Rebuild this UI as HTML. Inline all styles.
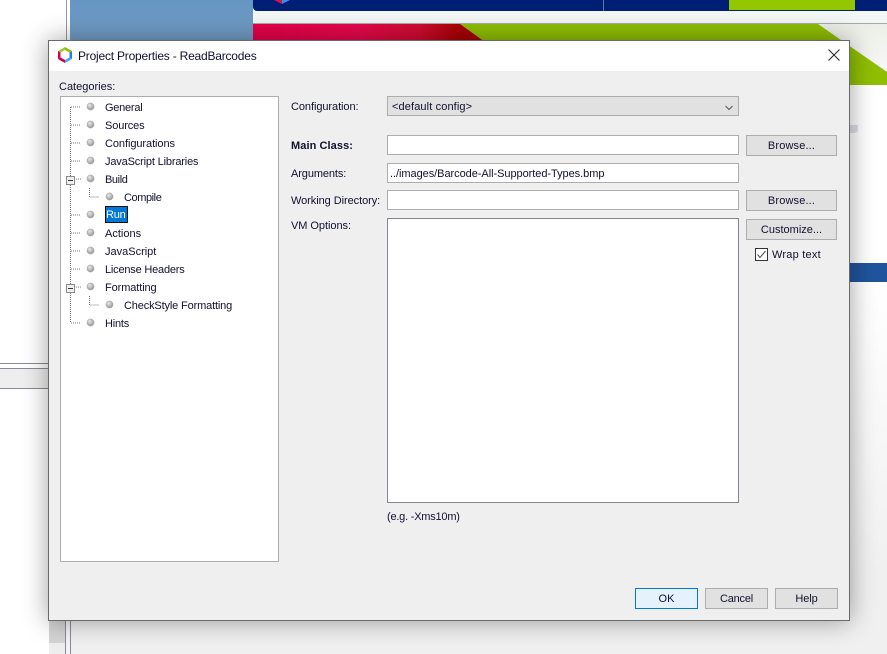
<!DOCTYPE html>
<html><head><meta charset="utf-8"><style>
html,body{margin:0;padding:0}
body{width:887px;height:654px;position:relative;overflow:hidden;background:#fff;font-family:"Liberation Sans",sans-serif;font-size:11px;color:#111}
div{position:absolute;box-sizing:border-box}
.t{white-space:nowrap;line-height:14px;height:14px;color:#101030}
.f{background:#fff;border:1px solid #adadad}
.b{background:#e1e1e1;border:1px solid #adadad;text-align:center;line-height:20px;white-space:nowrap;color:#101030}
</style></head><body>
<!-- background -->
<div style="left:66px;top:0;width:1px;height:654px;background:#9a9aa4"></div>
<div style="left:70px;top:0;width:183px;height:60px;background:linear-gradient(#6595c2,#7aa2c8)"></div>
<div style="left:253px;top:0;width:634px;height:11px;background:#001e73;overflow:hidden;border-radius:0 0 0 4px">
  <div style="left:55px;top:-20px;font-size:25px;font-weight:bold;line-height:25px;letter-spacing:.8px;color:#c4cce0;white-space:nowrap">NetBeans IDE</div>
  <svg style="position:absolute;left:21px;top:0" width="16" height="5"><polygon points="0,0 8,0 8,4" fill="#e0104c"/><polygon points="8,0 16,0 8,4" fill="#3090e8"/></svg>
</div>
<div style="left:603px;top:0;width:1px;height:11px;background:#5f78b0"></div>
<div style="left:729px;top:0;width:126px;height:10px;background:#93c700"></div>
<div style="left:253px;top:11px;width:634px;height:12px;background:#f2f6f4"></div>
<div style="left:253px;top:23px;width:634px;height:1px;background:#a8a8b0"></div>
<svg style="position:absolute;left:253px;top:24px" width="634" height="61">
<defs><linearGradient id="r" x1="0" x2="1" y1="0" y2="0"><stop offset="0" stop-color="#e6004a"/><stop offset=".45" stop-color="#e6084c"/><stop offset=".72" stop-color="#d00c30"/><stop offset=".9" stop-color="#a80000"/><stop offset="1" stop-color="#a80000"/></linearGradient>
<linearGradient id="w" x1="0" x2="0" y1="0" y2="1"><stop offset="0" stop-color="#ecefe6"/><stop offset="1" stop-color="#f8f8f8"/></linearGradient></defs>
<rect width="634" height="61" fill="#8fbf00"/>
<polygon points="0,0 207,0 232,18 0,18" fill="url(#r)"/>
<polygon points="565,0 634,0 634,48" fill="url(#w)"/>
</svg>
<div style="left:850px;top:85px;width:37px;height:197px;background:#fff"></div>
<div style="left:850px;top:125px;width:8px;height:8px;background:#dde0e8;border-radius:0 0 3px 0"></div>
<div style="left:850px;top:263px;width:37px;height:19px;background:#20549c"></div>
<div style="left:850px;top:282px;width:37px;height:290px;background:linear-gradient(#fff,#f0f0f0)"></div>
<div style="left:71px;top:572px;width:816px;height:82px;background:#f0f0f0"></div>
<div style="left:0;top:363px;width:48px;height:1px;background:#8a8a96"></div>
<div style="left:0;top:368px;width:48px;height:1px;background:#8a8a96"></div>
<div style="left:0;top:369px;width:48px;height:19px;background:#eeeeee"></div>
<div style="left:0;top:388px;width:48px;height:1px;background:#8a8a96"></div>
<div style="left:49px;top:620px;width:16px;height:34px;background:#eeeeee"></div>
<div style="left:49px;top:620px;width:16px;height:23px;background:#d4d4d4"></div>
<div style="left:65px;top:620px;width:6px;height:34px;background:#f4f4f8"></div>
<div style="left:65px;top:620px;width:1px;height:34px;background:#8a8a96"></div>
<div style="left:70px;top:620px;width:1px;height:34px;background:#8a8a96"></div>
<!-- dialog -->
<div style="left:48px;top:40px;width:802px;height:581px;background:#efefef;border:1px solid #6a6a6a;box-shadow:0 0 24px rgba(0,0,0,.38)"></div>
<div style="left:49px;top:41px;width:800px;height:30px;background:#fff"></div>
<svg style="position:absolute;left:57px;top:46px" width="16" height="18" viewBox="0 0 16 18">
<polygon points="8,1 15,5 15,13 8,17 1,13 1,5" fill="#fff"/>
<polygon points="8,1 15,5 12.5,6.5 8,4" fill="#8cc000"/><polygon points="8,1 1,5 3.5,6.5 8,4" fill="#a0c830"/>
<polygon points="1,5 3.5,6.5 3.5,11.5 1,13" fill="#d8004c"/><polygon points="1,13 3.5,11.5 8,14 8,17" fill="#c80048"/>
<polygon points="15,5 12.5,6.5 12.5,11.5 15,13" fill="#2080e0"/><polygon points="15,13 12.5,11.5 8,14 8,17" fill="#40a8f0"/>
</svg>
<div class="t" style="left:78px;top:49px;font-size:12px;letter-spacing:-.21px">Project Properties - ReadBarcodes</div>
<svg style="position:absolute;left:828px;top:49px" width="12" height="12"><path d="M.5.5L11.5 11.5M11.5.5L.5 11.5" stroke="#222" stroke-width="1" fill="none"/></svg>
<div class="t" style="left:59px;top:80px">Categories:</div>
<!-- tree -->
<div style="left:60px;top:96px;width:219px;height:466px;background:#fff;border:1px solid #adadad"></div>
<svg style="position:absolute;left:60px;top:96px" width="219" height="240">
<g stroke="#777" stroke-width="1" stroke-dasharray="1 1" fill="none" shape-rendering="crispEdges">
<path d="M10.5 11V227"/>
<path d="M11 11H21M11 29H21M11 47H21M11 65H21M16 83H21M11 119H21M11 137H21M11 155H21M11 173H21M16 191H21M11 227H21"/>
<path d="M29.5 92V101H39M29.5 200V209H39"/>
</g>
<g shape-rendering="crispEdges">
<rect x="6.5" y="80.5" width="8" height="8" fill="#efefef" stroke="#8a8a8a"/><path d="M8 84.500h5" stroke="#334"/>
<rect x="6.5" y="188.5" width="8" height="8" fill="#efefef" stroke="#8a8a8a"/><path d="M8 192.500h5" stroke="#334"/>
</g>
<defs><radialGradient id="g" cx=".4" cy=".35" r=".7"><stop offset="0" stop-color="#e8e8e8"/><stop offset="1" stop-color="#8e8e8e"/></radialGradient></defs>
<g fill="url(#g)" stroke="#a8a8a8" stroke-width=".5">
<circle cx="30.500" cy="10.500" r="3.600"/><circle cx="30.500" cy="28.500" r="3.600"/><circle cx="30.500" cy="46.500" r="3.600"/><circle cx="30.500" cy="64.500" r="3.600"/><circle cx="30.500" cy="82.500" r="3.600"/><circle cx="49.500" cy="100.500" r="3.600"/><circle cx="30.500" cy="118.500" r="3.600"/><circle cx="30.500" cy="136.500" r="3.600"/><circle cx="30.500" cy="154.500" r="3.600"/><circle cx="30.500" cy="172.500" r="3.600"/><circle cx="30.500" cy="190.500" r="3.600"/><circle cx="49.500" cy="208.500" r="3.600"/><circle cx="30.500" cy="226.500" r="3.600"/>
</g>
</svg>
<div class="t" style="left:105px;top:101px;letter-spacing:-.25px">General</div>
<div class="t" style="left:105px;top:119px;letter-spacing:-.12px">Sources</div>
<div class="t" style="left:105px;top:137px;letter-spacing:-.07px">Configurations</div>
<div class="t" style="left:105px;top:155px;letter-spacing:-.16px">JavaScript Libraries</div>
<div class="t" style="left:105px;top:173px;letter-spacing:-.4px">Build</div>
<div class="t" style="left:124px;top:191px;letter-spacing:-.42px">Compile</div>
<div class="t" style="left:105px;top:206px;width:23px;height:17px;line-height:14px;padding-top:1px;background:#0078d7;color:#fff;border:1px solid #111;letter-spacing:-.2px">Run</div>
<div class="t" style="left:105px;top:227px">Actions</div>
<div class="t" style="left:105px;top:245px">JavaScript</div>
<div class="t" style="left:105px;top:263px;letter-spacing:-.2px">License Headers</div>
<div class="t" style="left:105px;top:281px;letter-spacing:-.1px">Formatting</div>
<div class="t" style="left:124px;top:299px;letter-spacing:-.15px">CheckStyle Formatting</div>
<div class="t" style="left:105px;top:317px;letter-spacing:-.2px">Hints</div>
<!-- form -->
<div class="t" style="left:291px;top:100px;letter-spacing:-.07px">Configuration:</div>
<div style="left:387px;top:96px;width:352px;height:20px;background:#e1e1e1;border:1px solid #adadad"></div>
<div class="t" style="left:392px;top:100px;letter-spacing:.12px">&lt;default config&gt;</div>
<svg style="position:absolute;left:725px;top:105px" width="9" height="6"><path d="M.5 1L4 4.500L7.500 1" stroke="#555" fill="none"/></svg>
<div class="t" style="left:291px;top:139px;font-weight:bold;letter-spacing:.08px">Main Class:</div>
<div class="f" style="left:387px;top:135px;width:352px;height:20px"></div>
<div class="b" style="left:746px;top:135px;width:91px;height:21px;letter-spacing:.15px">Browse...</div>
<div class="t" style="left:291px;top:167px;letter-spacing:-.1px">Arguments:</div>
<div class="f" style="left:387px;top:163px;width:352px;height:20px"></div>
<div class="t" style="left:390px;top:167px;letter-spacing:-.05px">../images/Barcode-All-Supported-Types.bmp</div>
<div class="t" style="left:291px;top:194px;letter-spacing:-.06px">Working Directory:</div>
<div class="f" style="left:387px;top:190px;width:352px;height:20px"></div>
<div class="b" style="left:746px;top:190px;width:91px;height:21px;letter-spacing:.15px">Browse...</div>
<div class="t" style="left:291px;top:219px;letter-spacing:-.05px">VM Options:</div>
<div style="left:387px;top:218px;width:352px;height:285px;background:#fff;border:1px solid #828790"></div>
<div class="b" style="left:746px;top:219px;width:91px;height:21px">Customize...</div>
<div style="left:755px;top:248px;width:13px;height:13px;background:#fff;border:1px solid #333"></div>
<svg style="position:absolute;left:756px;top:249px" width="11" height="11"><path d="M1.500 5.500L4 8.500L9.500 2" stroke="#555" stroke-width="1.100" fill="none"/></svg>
<div class="t" style="left:772px;top:248px;letter-spacing:.22px">Wrap text</div>
<div class="t" style="left:387px;top:510px;letter-spacing:-.22px">(e.g. -Xms10m)</div>
<div class="b" style="left:635px;top:588px;width:63px;height:21px;background:#e5f1fb;border-color:#0078d7">OK</div>
<div class="b" style="left:705px;top:588px;width:63px;height:21px;letter-spacing:-.2px">Cancel</div>
<div class="b" style="left:775px;top:588px;width:63px;height:21px;letter-spacing:-.1px">Help</div>
</body></html>
